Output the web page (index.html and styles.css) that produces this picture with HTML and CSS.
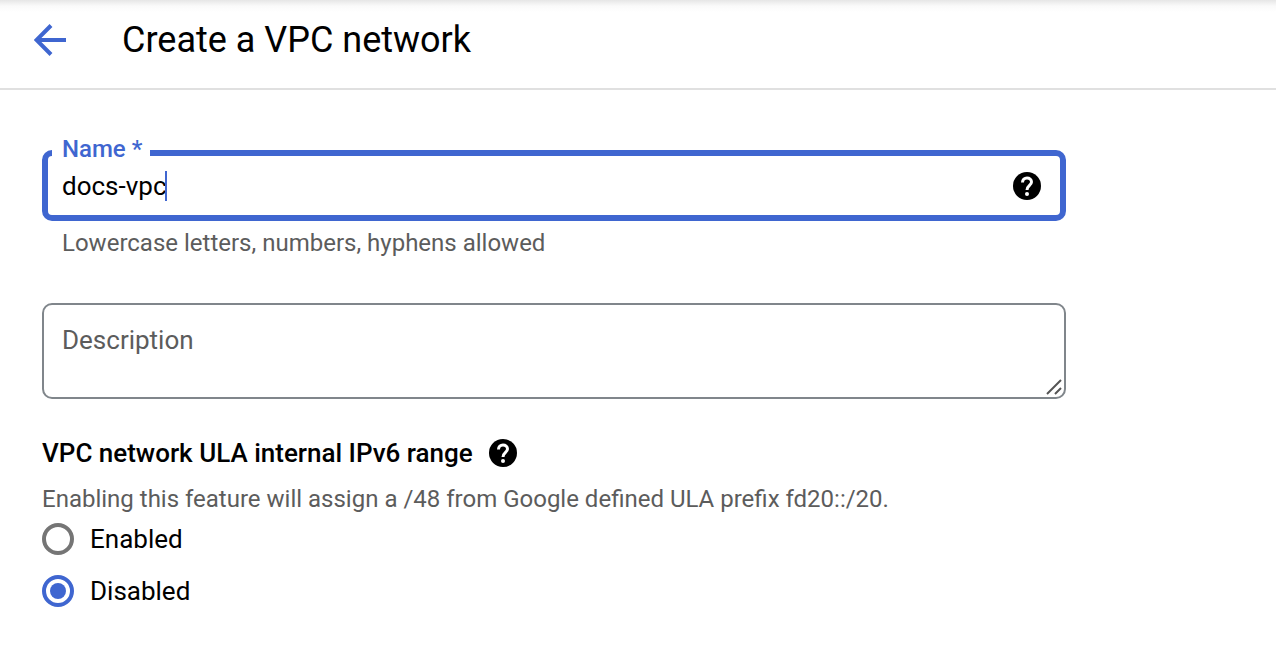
FILE: index.html
```html
<!DOCTYPE html>
<html lang="en">
<head>
<meta charset="utf-8">
<meta name="viewport" content="width=device-width, initial-scale=1">
<title>Create a VPC network</title>
<link rel="stylesheet" href="styles.css">
</head>
<body>
<header class="topbar">
  <button class="back" type="button" aria-label="Back">
    <svg viewBox="0 0 32 32" width="32" height="32"><path d="M32 16H3.500M17 1.500 2.500 16 17 30.500" fill="none" stroke="currentColor" stroke-width="4"/></svg>
  </button>
  <h1 class="title">Create a VPC network</h1>
</header>
<main>
  <form class="form">
    <fieldset class="outlined">
      <legend class="notch"><label for="name">Name *</label></legend>
      <div class="row">
        <div class="entry">
          <input class="text-input" id="name" type="text" value="docs-vpc" aria-describedby="name-hint">
          <span class="caret"></span>
        </div>
        <button class="help" type="button" aria-label="Help: name">
          <svg viewBox="0 0 28 28" width="28" height="28"><circle cx="14" cy="14" r="14" fill="currentColor"/><path d="M9.500 10.500C9.500 7.600 11.500 6 14 6s4.500 1.600 4.500 4.100c0 3.200-4.500 3.600-4.500 7.900" fill="none" stroke="#fff" stroke-width="3"/><circle cx="14" cy="22" r="2" fill="#fff"/></svg>
        </button>
      </div>
    </fieldset>
    <p class="hint" id="name-hint">Lowercase letters, numbers, hyphens allowed</p>
    <div class="area-wrap">
      <textarea class="area" placeholder="Description" aria-label="Description"></textarea>
      <svg class="grip" viewBox="0 0 16 16" width="16" height="16"><path d="M1 15 15 1M9 15l6-6" fill="none" stroke="currentColor" stroke-width="2"/></svg>
    </div>
    <section class="range" role="radiogroup" aria-labelledby="range-title">
      <div class="range-head">
        <h2 class="range-title" id="range-title">VPC network ULA internal IPv6 range</h2>
        <button class="help" type="button" aria-label="Help: IPv6 range">
          <svg viewBox="0 0 28 28" width="28" height="28"><circle cx="14" cy="14" r="14" fill="currentColor"/><path d="M9.500 10.500C9.500 7.600 11.500 6 14 6s4.500 1.600 4.500 4.100c0 3.200-4.500 3.600-4.500 7.900" fill="none" stroke="#fff" stroke-width="3"/><circle cx="14" cy="22" r="2" fill="#fff"/></svg>
        </button>
      </div>
      <p class="note">Enabling this feature will assign a /48 from Google defined ULA prefix fd20::/20.</p>
      <div class="options">
        <label class="option"><input class="radio" type="radio" name="ula" value="enabled">Enabled</label>
        <label class="option"><input class="radio" type="radio" name="ula" value="disabled" checked>Disabled</label>
      </div>
    </section>
  </form>
</main>
</body>
</html>
```

FILE: styles.css
```css
* {
  box-sizing: border-box;
}

body {
  margin: 0;
  background: #fff;
  color: #000;
  font: 400 26px/32px Roboto, "Liberation Sans", sans-serif;
}

.topbar {
  display: flex;
  align-items: center;
  gap: 56px;
  padding: 16px 34px 24px;
  border-bottom: 2px solid #e0e0e0;
  background: linear-gradient(#e6e6e6, #fafafa 6px, #fff 12px);
}

.back,
.help {
  display: flex;
  padding: 0;
  border: 0;
  background: none;
  color: #000;
}

.back {
  color: #3f66d0;
}

.title {
  margin: 0;
  font-size: 36px;
  font-weight: 400;
  line-height: 48px;
}

.form {
  max-width: 1108px;
  padding: 47px 42px 32px;
}

.outlined {
  min-width: 0;
  margin: 0;
  padding: 0 19px 12px 0;
  border: 6px solid #3f66d0;
  border-radius: 10px;
}

.notch {
  margin-left: 4px;
  padding: 0 8px 8px 10px;
  color: #3f66d0;
  font-size: 24px;
  font-weight: 500;
  line-height: 24px;
}

.row {
  display: flex;
  align-items: center;
  justify-content: space-between;
  min-height: 34px;
  padding-left: 14px;
}

.entry {
  display: flex;
  align-items: center;
  min-width: 0;
}

.text-input {
  field-sizing: content;
  max-width: 100%;
  padding: 0;
  border: 0;
  outline: 0;
  background: none;
  color: #000;
  font: inherit;
  caret-color: transparent;
}

.caret {
  width: 2px;
  height: 30px;
  margin-left: -2px;
  background: #3f66d0;
}

.hint {
  margin: 6px 20px 44px;
  color: #5c5c5c;
  font-size: 24px;
}

.area-wrap {
  position: relative;
  display: flex;
}

.area {
  width: 100%;
  height: 96px;
  padding: 19px 18px;
  border: 2px solid #80868b;
  border-radius: 10px;
  color: #000;
  font: inherit;
  resize: none;
}

.area::placeholder {
  color: #5c5c5c;
}

.grip {
  position: absolute;
  right: 4px;
  bottom: 4px;
  color: #555;
}

.range {
  margin-top: 38px;
}

.range-head {
  display: flex;
  align-items: center;
  gap: 16px;
}

.range-title {
  margin: 0;
  font-size: 26px;
  font-weight: 500;
  line-height: 32px;
}

.note {
  margin: 14px 0 8px;
  color: #5c5c5c;
  font-size: 24px;
}

.options {
  display: grid;
  gap: 20px;
}

.option {
  display: flex;
  align-items: center;
  gap: 16px;
}

.radio {
  appearance: none;
  flex: none;
  width: 32px;
  height: 32px;
  margin: 0;
  padding: 4px;
  border: 4px solid #757575;
  border-radius: 50%;
}

.radio:checked {
  border-color: #3f66d0;
}

.radio:checked::before {
  content: "";
  display: block;
  width: 16px;
  height: 16px;
  border-radius: 50%;
  background: #3f66d0;
}
```
